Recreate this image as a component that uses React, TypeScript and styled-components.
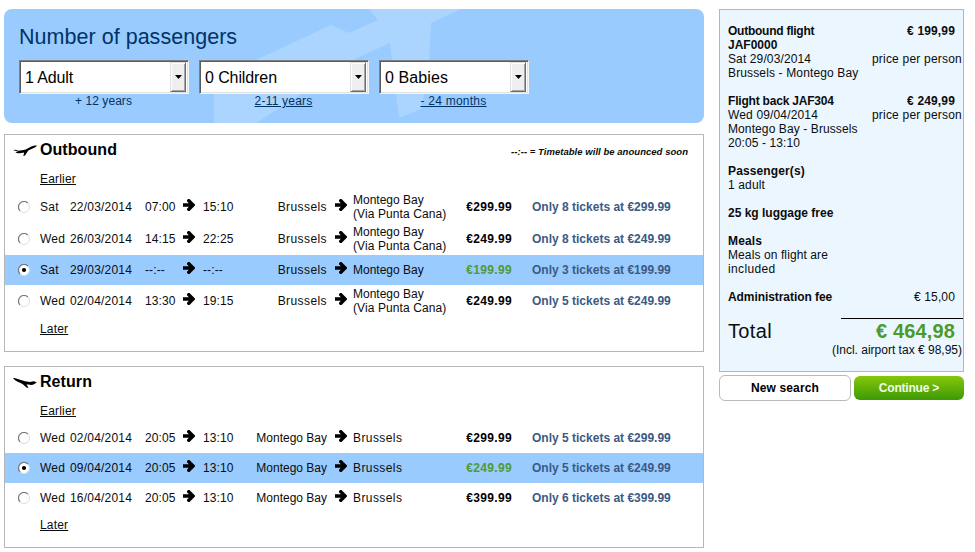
import React, { useState } from "react";
import styled, { createGlobalStyle } from "styled-components";

const GlobalStyle = createGlobalStyle`
  body {
    margin: 0;
    background: #fff;
    color: #0c0c0c;
    font: 12px/14px "Liberation Sans", Arial, sans-serif;
  }
`;

const Page = styled.main`
  display: flex;
  align-items: flex-start;
  gap: 15px;
  padding: 9px 0 0 4px;
`;

const Main = styled.div`
  width: 700px;
`;

const Text = styled.span<{ $track?: number }>`
  white-space: nowrap;
  letter-spacing: ${(p) => p.$track ?? 0}px;
`;

/* Passenger banner */

const Banner = styled.section`
  position: relative;
  box-sizing: border-box;
  height: 114px;
  padding: 14px 15px 0;
  border-radius: 8px;
  overflow: hidden;
  background: #99cbff;
  color: #003366;
`;

const Watermark = styled.svg`
  position: absolute;
  inset: 0;
`;

const BannerTitle = styled.h1`
  position: relative;
  margin: 0 0 9px;
  font-size: 21.5px;
  line-height: 28px;
  font-weight: 400;
  letter-spacing: 0.03px;
`;

const Fields = styled.div`
  position: relative;
  display: flex;
  gap: 10px;
`;

const Field = styled.div<{ $width: number }>`
  display: flex;
  flex-direction: column;
  align-items: center;
  width: ${(p) => p.$width}px;
`;

const SelectBox = styled.div`
  box-sizing: border-box;
  display: flex;
  align-items: stretch;
  justify-content: space-between;
  width: 100%;
  height: 34px;
  border: 1px solid;
  border-color: #7f7f7f #f4f4f4 #f4f4f4 #7f7f7f;
  background: #fff;
  box-shadow: inset 1px 1px 0 #5c5c5c, inset -1px -1px 0 #e4e2de;
  color: #000;
  font-size: 16px;
  line-height: 33px;
  padding-left: 5px;
`;

const SelectArrow = styled.span`
  box-sizing: border-box;
  display: flex;
  align-items: center;
  justify-content: center;
  width: 16px;
  margin: 1px 2px 1px 1px;
  border: 1px solid;
  border-color: #e0e0e0 #6c6c6c #6c6c6c #e0e0e0;
  box-shadow: inset 1px 1px 0 #fff, inset -1px -1px 0 #a5a5a5;
  background: #efefef;
`;

const Caption = styled.span<{ $link?: boolean; $track?: number }>`
  margin-right: 1px;
  font-size: 12px;
  line-height: 14px;
  letter-spacing: ${(p) => p.$track ?? 0.1}px;
  text-decoration: ${(p) => (p.$link ? "underline" : "none")};
`;

/* Flight tables */

const Panel = styled.section<{ $gap: number; $height: number }>`
  box-sizing: border-box;
  height: ${(p) => p.$height}px;
  margin-top: ${(p) => p.$gap}px;
  border: 1px solid #b7b7b7;
  background: #fff;
`;

const PanelHeader = styled.header`
  display: flex;
  align-items: center;
  box-sizing: border-box;
  height: 31px;
  padding: 0 15px 2px 8px;
`;

const PanelTitle = styled.h2`
  flex: 1;
  margin: 0 0 0 3px;
  color: #000;
  font-size: 16px;
  line-height: 20px;
  letter-spacing: 0.07px;
`;

const Legend = styled.span`
  padding-top: 4px;
  font: italic bold 9.5px/14px "Liberation Sans", Arial, sans-serif;
  letter-spacing: 0.04px;
`;

const Pager = styled.div<{ $height: number }>`
  display: flex;
  align-items: center;
  height: ${(p) => p.$height}px;
  padding-left: 35px;
`;

const PagerLink = styled.a`
  color: inherit;
  letter-spacing: 0.18px;
  text-decoration: underline;
  cursor: pointer;
`;

const FlightRow = styled.div<{ $selected: boolean; $tall: boolean }>`
  display: grid;
  grid-template-columns: 22px 30px 75px 38px 20px 54px 70px 26px 107px 58px auto;
  align-items: center;
  height: ${(p) => (p.$tall ? 32 : 30)}px;
  padding-left: 13px;
  background: ${(p) => (p.$selected ? "#99cbff" : "transparent")};
  cursor: pointer;
`;

const Radio = styled.svg`
  display: block;
`;

const ArrowIcon = styled.svg`
  display: block;
  margin-bottom: 4px;
`;

const RouteArrow = styled.span`
  padding-left: 8px;
`;

const From = styled(Text)`
  justify-self: end;
`;

const Price = styled(Text)<{ $selected: boolean }>`
  justify-self: end;
  margin-right: 6px;
  color: ${(p) => (p.$selected ? "#4e9a3a" : "#000")};
  font-weight: 700;
`;

const Availability = styled(Text)`
  padding-left: 14px;
  color: #3b5a85;
  font-weight: 700;
`;

/* Booking summary */

const Aside = styled.aside`
  width: 245px;
`;

const Summary = styled.section`
  box-sizing: border-box;
  height: 363px;
  padding: 14px 0 0 8px;
  border: 1px solid #b0b6bc;
  background: #ebf6ff;
`;

const Block = styled.div`
  margin-bottom: 14px;
`;

const Line = styled.div<{ $inset?: boolean }>`
  display: flex;
  justify-content: space-between;
  padding-right: ${(p) => (p.$inset ? 8 : 1)}px;
`;

const Bold = styled(Text)`
  font-weight: 700;
`;

const Rule = styled.hr`
  width: 122px;
  height: 1px;
  margin: 0 0 0 auto;
  border: 0;
  background: #000;
`;

const TotalLine = styled.div`
  display: flex;
  justify-content: space-between;
  padding-right: 8px;
  font-size: 20px;
  line-height: 24px;
`;

const TotalPrice = styled(Text)`
  color: #4e9a28;
  font-weight: 700;
`;

const Tax = styled.div`
  text-align: right;
  padding-right: 1px;
`;

const Actions = styled.div`
  display: flex;
  align-items: center;
  gap: 3px;
  margin-top: 3px;
`;

const Button = styled.button<{ $primary?: boolean }>`
  box-sizing: border-box;
  width: ${(p) => (p.$primary ? 110 : 132)}px;
  height: ${(p) => (p.$primary ? 24 : 26)}px;
  padding: 0;
  border: ${(p) => (p.$primary ? "0" : "1px solid #b9b9b9")};
  border-radius: 6px;
  background: ${(p) => (p.$primary ? "linear-gradient(#87c70a, #3c9a06)" : "#fff")};
  color: ${(p) => (p.$primary ? "#f2fbe6" : "#000")};
  font: bold 12px/14px "Liberation Sans", Arial, sans-serif;
  letter-spacing: ${(p) => (p.$primary ? -0.2 : 0.13)}px;
`;

const Arrow = () => (
  <ArrowIcon width="12" height="12" viewBox="0 0 12 12">
    <path d="M0 4.300h5.800L4 2.200V1L5.200 0h1.300L12 5.500v1L6.500 12H5.200L4 11V9.800l1.800-2.100H0z" fill="#000" />
  </ArrowIcon>
);

const RadioMark = ({ on }: { on: boolean }) => (
  <Radio width="12" height="12" viewBox="0 0 12 12">
    <circle cx="6" cy="6" r="5.2" fill="#fff" />
    <path d="M2.100 9.900A5.300 5.300 0 0 1 9.900 2.100" fill="none" stroke="#777" strokeWidth="1.2" />
    <path d="M9.900 2.100A5.300 5.300 0 0 1 2.100 9.900" fill="none" stroke="#deddd9" strokeWidth="1" />
    {on && <circle cx="6" cy="6" r="2.1" fill="#000" />}
  </Radio>
);

const Takeoff = () => (
  <svg width="24" height="18" viewBox="0 0 24 18">
    <path
      d="M0 9 2.500 8.700 5.500 9.800 12 8.700 17.500 5.900C19.500 4.900 22.500 4.200 23.700 4.600 24.100 5.200 22.500 6.300 20.700 7.100L15.300 9.500 12 14.600 10.300 15 11.200 11.500 7 12.300C4.500 12.400 2.800 11.700 2.500 11L5.500 10.700z"
      fill="#000"
    />
  </svg>
);

const Landing = () => (
  <svg width="24" height="18" viewBox="0 0 24 18">
    <path
      d="M0 5C1.500 4.800 3.500 5.400 5.500 6.300L12 8.300 17 9 20.500 8.200 23.800 9.200 21.500 11C19.800 12 17.500 12.100 15.800 11.600L13.500 11.400 15.500 14.800 13.800 14.700 9.500 11 6.500 9.600C4 8.800 1.500 7.200 0 5z"
      fill="#000"
    />
  </svg>
);

interface PassengerField {
  value: string;
  track: number;
  caption: string;
  captionTrack: number;
  link: boolean;
  width: number;
}

const passengerFields: PassengerField[] = [
  { value: "1 Adult", track: -0.12, caption: "+ 12 years", captionTrack: 0.06, link: false, width: 170 },
  { value: "0 Children", track: -0.1, caption: "2-11 years", captionTrack: 0.2, link: true, width: 170 },
  { value: "0 Babies", track: 0.1, caption: "- 24 months", captionTrack: 0.24, link: true, width: 150 },
];

interface Flight {
  day: string;
  date: string;
  departs: string;
  arrives: string;
  from: string;
  to: string;
  via?: string;
  price: string;
  left: number;
}

const outbound: Flight[] = [
  { day: "Sat", date: "22/03/2014", departs: "07:00", arrives: "15:10", from: "Brussels", to: "Montego Bay", via: "(Via Punta Cana)", price: "€299.99", left: 8 },
  { day: "Wed", date: "26/03/2014", departs: "14:15", arrives: "22:25", from: "Brussels", to: "Montego Bay", via: "(Via Punta Cana)", price: "€249.99", left: 8 },
  { day: "Sat", date: "29/03/2014", departs: "--:--", arrives: "--:--", from: "Brussels", to: "Montego Bay", price: "€199.99", left: 3 },
  { day: "Wed", date: "02/04/2014", departs: "13:30", arrives: "19:15", from: "Brussels", to: "Montego Bay", via: "(Via Punta Cana)", price: "€249.99", left: 5 },
];

const inbound: Flight[] = [
  { day: "Wed", date: "02/04/2014", departs: "20:05", arrives: "13:10", from: "Montego Bay", to: "Brussels", price: "€299.99", left: 5 },
  { day: "Wed", date: "09/04/2014", departs: "20:05", arrives: "13:10", from: "Montego Bay", to: "Brussels", price: "€249.99", left: 5 },
  { day: "Wed", date: "16/04/2014", departs: "20:05", arrives: "13:10", from: "Montego Bay", to: "Brussels", price: "€399.99", left: 6 },
];

const placeTrack = (name: string) => (name === "Brussels" ? 0.42 : 0);

function FlightList({ flights, initial }: { flights: Flight[]; initial: number }) {
  const [selected, setSelected] = useState(initial);
  return (
    <>
      <Pager $height={25}>
        <PagerLink>Earlier</PagerLink>
      </Pager>
      {flights.map((f, i) => {
        const on = i === selected;
        return (
          <FlightRow key={f.date} $selected={on} $tall={!!f.via} onClick={() => setSelected(i)}>
            <RadioMark on={on} />
            <Text $track={0.25}>{f.day}</Text>
            <Text $track={0.2}>{f.date}</Text>
            <Text $track={0.1}>{f.departs}</Text>
            <Arrow />
            <Text $track={0.1}>{f.arrives}</Text>
            <From $track={placeTrack(f.from)}>{f.from}</From>
            <RouteArrow>
              <Arrow />
            </RouteArrow>
            <Text $track={placeTrack(f.to)}>
              {f.to}
              {f.via && (
                <>
                  <br />
                  <Text $track={0.1}>{f.via}</Text>
                </>
              )}
            </Text>
            <Price $track={0.35} $selected={on}>
              {f.price}
            </Price>
            <Availability>
              Only {f.left} tickets at {f.price}
            </Availability>
          </FlightRow>
        );
      })}
      <Pager $height={24}>
        <PagerLink>Later</PagerLink>
      </Pager>
    </>
  );
}

export default function App() {
  return (
    <>
      <GlobalStyle />
      <Page>
        <Main>
          <Banner>
            <Watermark width="700" height="114" viewBox="4 9 700 114">
              <path
                d="M214 93V123H256L359 57 390 43 399 118 421 109 428 80 431 23 461 9H369L378 20 349 33 331 25 258 59z"
                fill="#abd5ff"
              />
            </Watermark>
            <BannerTitle>Number of passengers</BannerTitle>
            <Fields>
              {passengerFields.map((f) => (
                <Field key={f.value} $width={f.width}>
                  <SelectBox>
                    <Text $track={f.track}>{f.value}</Text>
                    <SelectArrow>
                      <svg width="7" height="4" viewBox="0 0 7 4">
                        <path d="M0 0h7L3.500 4z" fill="#000" />
                      </svg>
                    </SelectArrow>
                  </SelectBox>
                  <Caption $link={f.link} $track={f.captionTrack}>
                    {f.caption}
                  </Caption>
                </Field>
              ))}
            </Fields>
          </Banner>

          <Panel $gap={11} $height={218}>
            <PanelHeader>
              <Takeoff />
              <PanelTitle>Outbound</PanelTitle>
              <Legend>--:-- = Timetable will be anounced soon</Legend>
            </PanelHeader>
            <FlightList flights={outbound} initial={2} />
          </Panel>

          <Panel $gap={14} $height={182}>
            <PanelHeader>
              <Landing />
              <PanelTitle>Return</PanelTitle>
            </PanelHeader>
            <FlightList flights={inbound} initial={1} />
          </Panel>
        </Main>

        <Aside>
          <Summary>
            <Block>
              <Line $inset>
                <Bold $track={-0.25}>Outbound flight</Bold>
                <Bold $track={0.15}>€ 199,99</Bold>
              </Line>
              <Bold>JAF0000</Bold>
              <Line>
                <Text $track={0.12}>Sat 29/03/2014</Text>
                <Text $track={0.21}>price per person</Text>
              </Line>
              <Text $track={0.14}>Brussels - Montego Bay</Text>
            </Block>
            <Block>
              <Line $inset>
                <Bold $track={-0.2}>Flight back JAF304</Bold>
                <Bold $track={0.15}>€ 249,99</Bold>
              </Line>
              <Line>
                <Text $track={0.15}>Wed 09/04/2014</Text>
                <Text $track={0.21}>price per person</Text>
              </Line>
              <Line>
                <Text $track={0.1}>Montego Bay - Brussels</Text>
              </Line>
              <Text $track={0.1}>20:05 - 13:10</Text>
            </Block>
            <Block>
              <Line>
                <Bold $track={0.13}>Passenger(s)</Bold>
              </Line>
              <Text $track={0.14}>1 adult</Text>
            </Block>
            <Block>
              <Bold>25 kg luggage free</Bold>
            </Block>
            <Block>
              <Line>
                <Bold $track={0.13}>Meals</Bold>
              </Line>
              <Line>
                <Text $track={0.1}>Meals on flight are</Text>
              </Line>
              <Text $track={0.35}>included</Text>
            </Block>
            <Block>
              <Line $inset>
                <Bold $track={-0.07}>Administration fee</Bold>
                <Text $track={0.14}>€ 15,00</Text>
              </Line>
            </Block>
            <Rule />
            <TotalLine>
              <Text $track={0.35}>Total</Text>
              <TotalPrice $track={0.14}>€ 464,98</TotalPrice>
            </TotalLine>
            <Tax>
              <Text>(Incl. airport tax € 98,95)</Text>
            </Tax>
          </Summary>
          <Actions>
            <Button>New search</Button>
            <Button $primary>Continue &gt;</Button>
          </Actions>
        </Aside>
      </Page>
    </>
  );
}
